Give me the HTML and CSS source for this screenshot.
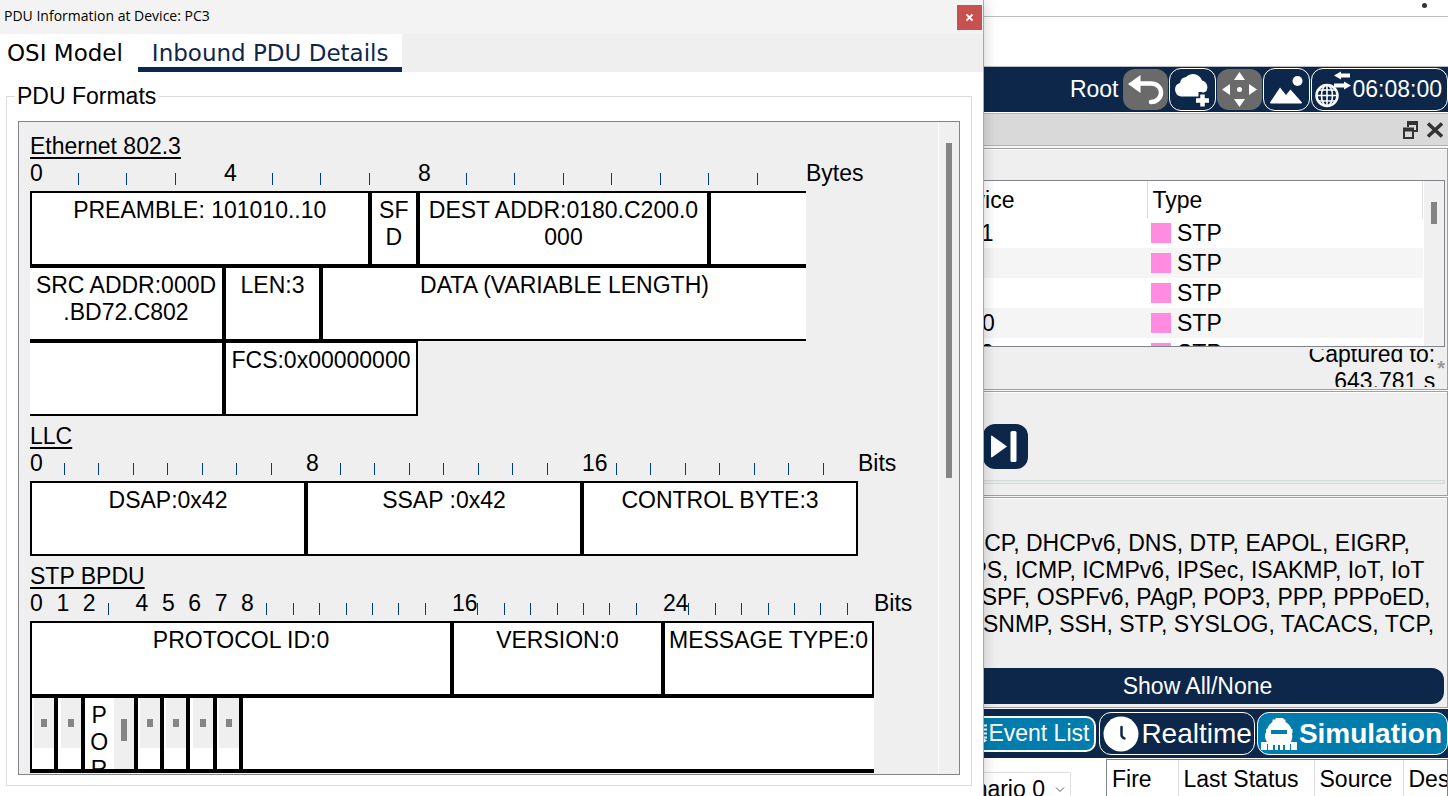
FILE: index.html
```html
<!DOCTYPE html>
<html lang="en">
<head>
<meta charset="utf-8">
<title>PDU Information</title>
<link rel="stylesheet" href="styles.css">
</head>
<body>
<div class="desktop">
  <section class="dialog" aria-label="PDU Information at Device: PC3">
    <header class="titlebar">
      <h1 class="titlebar-text">PDU Information at Device: PC3</h1>
      <button class="close-btn" type="button" aria-label="Close">
        <svg width="9" height="9" viewBox="0 0 9 9"><path d="M1.5 1.5l6 6M7.5 1.5l-6 6" stroke="#fff" stroke-width="1.8"/></svg>
      </button>
    </header>
    <nav class="tabs">
      <button class="tab" type="button">OSI Model</button>
      <button class="tab tab-active" type="button">Inbound PDU Details</button>
    </nav>
    <fieldset class="formats">
      <legend>PDU Formats</legend>
      <div class="viewport">
        <div class="viewport-body">
          <section class="pdu">
            <h2 class="pdu-title">Ethernet 802.3</h2>
            <div class="ruler">
              <div class="scale scale-16">
                <span>0</span><i></i><i></i><i></i><span>4</span><i></i><i></i><i></i><span>8</span><i></i><i></i><i></i><i></i><i></i><i></i><i></i>
              </div>
              <span>Bytes</span>
            </div>
            <div class="scale scale-16">
              <div class="cell span-7">PREAMBLE: 101010..10</div>
              <div class="cell span-1">SF<br>D</div>
              <div class="cell span-6">DEST ADDR:0180.C200.0<br>000</div>
              <div class="cell span-2 open-right"></div>
              <div class="cell span-4 open-left">SRC ADDR:000D<br>.BD72.C802</div>
              <div class="cell span-2">LEN:3</div>
              <div class="cell span-10 open-right">DATA (VARIABLE LENGTH)</div>
              <div class="cell span-4 open-left"></div>
              <div class="cell span-4">FCS:0x00000000</div>
            </div>
          </section>
          <section class="pdu">
            <h2 class="pdu-title">LLC</h2>
            <div class="ruler">
              <div class="scale scale-24">
                <span>0</span><i></i><i></i><i></i><i></i><i></i><i></i><i></i><span>8</span><i></i><i></i><i></i><i></i><i></i><i></i><i></i><span>16</span><i></i><i></i><i></i><i></i><i></i><i></i><i></i>
              </div>
              <span>Bits</span>
            </div>
            <div class="scale scale-24">
              <div class="cell span-8">DSAP:0x42</div>
              <div class="cell span-8">SSAP :0x42</div>
              <div class="cell span-8">CONTROL BYTE:3</div>
            </div>
          </section>
          <section class="pdu">
            <h2 class="pdu-title">STP BPDU</h2>
            <div class="ruler">
              <div class="scale scale-32">
                <span>0</span><span>1</span><span>2</span><i></i><span>4</span><span>5</span><span>6</span><span>7</span><span>8</span><i></i><i></i><i></i><i></i><i></i><i></i><i></i><span>16</span><i></i><i></i><i></i><i></i><i></i><i></i><i></i><span>24</span><i></i><i></i><i></i><i></i><i></i><i></i><i></i>
              </div>
              <span>Bits</span>
            </div>
            <div class="scale scale-32 flags">
              <div class="cell span-16">PROTOCOL ID:0</div>
              <div class="cell span-8">VERSION:0</div>
              <div class="cell span-8">MESSAGE TYPE:0</div>
              <div class="cell span-1 flag"><b class="mini"></b></div>
              <div class="cell span-1 flag"><b class="mini"></b></div>
              <div class="cell span-2 flag"><span class="role">P<br>O<br>R</span><b class="mini mini-tall"></b></div>
              <div class="cell span-1 flag"><b class="mini"></b></div>
              <div class="cell span-1 flag"><b class="mini"></b></div>
              <div class="cell span-1 flag"><b class="mini"></b></div>
              <div class="cell span-1 flag"><b class="mini"></b></div>
              <div class="cell span-24 flag open-right"></div>
            </div>
          </section>
        </div>
        <div class="scrollbar"><div class="thumb thumb-long"></div></div>
      </div>
    </fieldset>
  </section>

  <main class="app">
    <div class="strip strip-top"><span class="dot"></span></div>
    <div class="strip strip-blank"></div>
    <div class="toolbar">
      <span class="root">Root</span>
      <button class="tool tool-off" type="button" aria-label="Back">
        <svg width="45" height="41" viewBox="0 0 45 41"><path d="M5 15L17.500 6v18z" fill="#fff"/><path d="M16 14.500h12c6 0 10 4 10 9s-4 9.500-10 9.500" fill="none" stroke="#fff" stroke-width="4.500" stroke-linecap="round"/></svg>
      </button>
      <button class="tool" type="button" aria-label="New cluster">
        <svg width="45" height="41" viewBox="0 0 45 41"><path d="M11 27.500a7 7 0 0 1-1-13.600a7 7 0 0 1 6-5.900a9.500 9.500 0 0 1 16 3.500a7 7 0 0 1 4 11l-3.500 1.500v-1h-4v4.500z" fill="#fff"/><path d="M32.500 25.500v12M26 31.500h13" stroke="#fff" stroke-width="4.500"/></svg>
      </button>
      <button class="tool tool-off" type="button" aria-label="Move object">
        <svg width="45" height="41" viewBox="0 0 45 41" fill="#fff"><path d="M22.500 3l5.500 8H17zM22.500 38l-5.500-8h11zM5 20.500l8-5.500v11zM40 20.500l-8-5.500v11z"/><circle cx="22.500" cy="20.500" r="2.500"/></svg>
      </button>
      <button class="tool" type="button" aria-label="Set background">
        <svg width="45" height="41" viewBox="0 0 45 41" fill="#fff"><circle cx="33.500" cy="12" r="5"/><path d="M6 33.500L16 18.500l6 7.500 4.500-5.500L38 33.500q0 1-1 1H7q-1 0-1-1z"/></svg>
      </button>
      <button class="tool tool-clock" type="button">
        <svg width="38" height="41" viewBox="0 0 38 41" fill="none" stroke="#fff"><circle cx="13" cy="26.500" r="10.500" stroke-width="2.500"/><path d="M13 16v21M3 26.500h20M5 21h16M5 32h16" stroke-width="1.600"/><ellipse cx="13" cy="26.500" rx="5.500" ry="10.500" stroke-width="1.600"/><path d="M24 6.500h12M20 16.500h12" stroke-width="4"/><path d="M20 6.500l7-4v8zM37 16.500l-7-4v8z" fill="#fff" stroke="none"/></svg>
        <span>06:08:00</span>
      </button>
    </div>
    <div class="dock">
      <button class="dock-btn" type="button" aria-label="Float"><svg width="17" height="18" viewBox="0 0 17 18" fill="none" stroke="#333" stroke-width="2"><path d="M6 6V2h9v8h-4M2 8h9v9H2z"/><path d="M5 2h11M1 8.500h11" stroke-width="4"/></svg></button>
      <button class="dock-btn" type="button" aria-label="Close panel"><svg width="16" height="16" viewBox="0 0 16 16"><path d="M1 1.500l14 13M15 1.500l-14 13" stroke="#333" stroke-width="3.500"/></svg></button>
    </div>
    <div class="panels">
      <section class="panel panel-events">
        <div class="events">
          <table class="event-table">
            <thead><tr><th class="col-device">At Device</th><th>Type</th></tr></thead>
            <tbody>
              <tr><td>Switch1</td><td><span class="swatch"></span>STP</td></tr>
              <tr><td></td><td><span class="swatch"></span>STP</td></tr>
              <tr><td></td><td><span class="swatch"></span>STP</td></tr>
              <tr><td>Router0</td><td><span class="swatch"></span>STP</td></tr>
              <tr><td>Switch2</td><td><span class="swatch"></span>STP</td></tr>
            </tbody>
          </table>
          <div class="scrollbar"><div class="thumb thumb-short"></div></div>
        </div>
        <div class="captured"><p>Captured to:<br>643.781 s</p><span class="star">*</span></div>
      </section>
      <section class="panel panel-play">
        <button class="play" type="button" aria-label="Capture then forward">
          <svg width="45" height="45" viewBox="0 0 45 45" fill="#fff"><path d="M8 12.500q0-1.500 1.500-.5l14.500 10.500-14.500 10.500q-1.500 1-1.500-.5z"/><rect x="27.500" y="7" width="6" height="31" rx="1.500"/></svg>
        </button>
        <div class="progress"></div>
      </section>
      <section class="panel panel-filters">
        <p class="protocols">DHCP, DHCPv6, DNS, DTP, EAPOL, EIGRP,<br>&nbsp;TPS, ICMP, ICMPv6, IPSec, ISAKMP, IoT, IoT<br>, OSPF, OSPFv6, PAgP, POP3, PPP, PPPoED,<br>M, SNMP, SSH, STP, SYSLOG, TACACS, TCP,</p>
        <button class="show-all" type="button">Show All/None</button>
      </section>
    </div>
    <div class="modes">
      <button class="mode mode-list" type="button">
        <svg width="16" height="20" viewBox="0 0 16 20" stroke="#fff" stroke-width="2"><path d="M3 1.500h12M3 5.500h12M3 9.500h12M3 13.500h12"/><path d="M10 13l5 3.500-5 3.500z" fill="#fff" stroke="none"/></svg>
        <span>Event List</span>
      </button>
      <button class="mode" type="button">
        <svg width="36" height="36" viewBox="0 0 36 36"><circle cx="18" cy="18" r="17.500" fill="#fff"/><path d="M18.500 11v8q0 2 3 3.500" fill="none" stroke="#0d274b" stroke-width="2.500" stroke-linecap="round"/></svg>
        <span>Realtime</span>
      </button>
      <button class="mode mode-sim" type="button">
        <svg width="36" height="36" viewBox="0 0 36 36"><path d="M0 26h6q-3-4-1.500-9H5v-4h1q2-5 5.500-7V3.500h3V2h8v1.500h2V6q4 2 6 7h1v4h-.5Q32 22 30 26h6v8H0z" fill="#fff"/><path d="M10 14h16v4H10zM12 29h2v5h-2zM17 29h2v5h-2zM22 29h2v5h-2z" fill="#007cad"/><path d="M6.500 28v6M29.500 28v6" stroke="#007cad"/></svg>
        <span>Simulation</span>
      </button>
    </div>
    <div class="bottom">
      <select class="scenario" aria-label="Scenario"><option>Scenario 0</option></select>
      <svg class="chevron" width="10" height="6" viewBox="0 0 10 6"><path d="M1 .5l4 4 4-4" fill="none" stroke="#555"/></svg>
      <div class="pdu-list">
        <table class="pdu-table"><thead><tr><th class="col-fire">Fire</th><th class="col-status">Last Status</th><th class="col-source">Source</th><th>Des</th></tr></thead></table>
      </div>
    </div>
  </main>
</div>
</body>
</html>
```
FILE: styles.css
```css
* { box-sizing: border-box; }

body {
  margin: 0;
  font-family: "Liberation Sans", Arial, sans-serif;
  font-size: 23px;
  line-height: 27px;
  color: #000;
  background: #fff;
  overflow: hidden;
}

button, select {
  font: inherit;
  color: inherit;
  border: 0;
  padding: 0;
  background: none;
}

svg { display: block; flex: none; }
h1, h2, p { margin: 0; font-size: inherit; font-weight: normal; }

.desktop { display: flex; min-height: 100vh; }

/* Dialog window */
.dialog {
  position: relative;
  z-index: 1;
  flex: 1;
  min-width: 0;
  display: flex;
  flex-direction: column;
  background: #fff;
  border-right: 1px solid #a8a8a8;
  box-shadow: 0 0 14px rgba(0, 0, 0, 0.2);
}

.titlebar {
  display: flex;
  align-items: center;
  justify-content: space-between;
  height: 34px;
  padding: 0 1px 0 4px;
  background: #f3f3f3;
}

.titlebar-text {
  font-family: "Open Sans", "Noto Sans", sans-serif;
  font-size: 14px;
  line-height: 30px;
  padding-bottom: 2px;
}

.close-btn {
  display: grid;
  place-items: center;
  width: 25px;
  height: 25px;
  background: #c75050;
}

.tabs { display: flex; background: #efefef; }

.tab {
  height: 38px;
  padding: 6px 15px 0 7px;
  font-family: "DejaVu Sans", sans-serif;
  font-size: 23px;
  background: #fff;
  border-bottom: 5px solid #fff;
}

.tab-active { padding: 6px 14px 0; color: #0d274b; border-color: #0d274b; }

.formats {
  flex: 1;
  display: flex;
  min-width: 0;
  margin: 11px 11px 10px 6px;
  padding: 11px 11px 10px;
  border: 1px solid #dcdcdc;
}

.formats legend { padding: 0 3px 0 2px; margin-left: -3px; }

.viewport {
  display: flex;
  flex: 1;
  min-width: 0;
  background: #efefef;
  border: 1px solid #82848c;
}

.viewport-body { flex: 1; min-width: 0; padding: 11px 0 0 11px; overflow: hidden; }

.scrollbar {
  flex: none;
  width: 21px;
  padding: 21px 7px 0;
  background: #f0f0f0;
  border-left: 1px solid #fff;
}

.thumb { width: 6px; background: #858585; }
.thumb-long { height: 335px; }
.thumb-short { height: 22px; }

/* Packet layout diagrams */
.pdu { margin-bottom: 7px; }
.pdu:last-child { margin-bottom: 0; }
.pdu-title { text-decoration: underline; text-decoration-thickness: 2px; text-underline-offset: 3px; text-decoration-skip-ink: none; }
.ruler { display: flex; height: 31px; }
.scale { display: grid; flex: none; }
.scale-16 { width: 776px; grid-template-columns: repeat(16, minmax(0, 1fr)); }
.scale-24 { width: 828px; grid-template-columns: repeat(24, minmax(0, 1fr)); }
.scale-32 { width: 844px; grid-template-columns: repeat(32, minmax(0, 1fr)); }
.ruler span { white-space: nowrap; }
.ruler i { height: 12px; margin: 13px 0 0 -1px; border-left: 1px solid #003c8c; }

.cell {
  height: 75px;
  padding-top: 4px;
  text-align: center;
  white-space: nowrap;
  overflow: hidden;
  background: #fff;
  border: 2px solid #000;
}

.open-left { border-left: 0; }
.open-right { border-right: 0; }
.span-1 { grid-column: span 1; }
.span-2 { grid-column: span 2; }
.span-4 { grid-column: span 4; }
.span-6 { grid-column: span 6; }
.span-7 { grid-column: span 7; }
.span-8 { grid-column: span 8; }
.span-10 { grid-column: span 10; }
.span-16 { grid-column: span 16; }
.span-24 { grid-column: span 24; }
.flag { display: flex; justify-content: flex-end; padding: 0; border-bottom-width: 4px; }
.flags .flag { height: 77px; }
.role { flex: 1; padding-top: 4px; }
.mini { flex: none; width: 20px; height: 50px; padding: 21px 7px; background: #efefef; }
.mini::before { content: ""; display: block; width: 6px; height: 8px; background: #858585; }
.mini-tall { height: auto; }
.mini-tall::before { height: 22px; }

/* Main window, partly under the dialog */
.app {
  flex: 0 0 544px;
  margin-left: -80px;
  min-width: 0;
  display: flex;
  flex-direction: column;
  max-height: 100vh;
  overflow: hidden;
}

.strip { flex: none; border-bottom: 1px solid #bdbdbd; }
.strip-top { display: flex; justify-content: flex-end; height: 17px; padding: 3px 21px 0 0; }
.strip-blank { height: 50px; }
.dot { width: 5px; height: 5px; border-radius: 50%; background: #333; }

.toolbar {
  display: flex;
  flex: none;
  align-items: center;
  justify-content: flex-end;
  gap: 1px;
  height: 45px;
  color: #fff;
  background: #0d274b;
}

.root { margin-right: 4px; }

.tool {
  display: flex;
  align-items: center;
  height: 43px;
  border: 1px solid #fff;
  border-radius: 12px;
}

.tool-off { height: 41px; border: 0; background: #6a6a6a; }
.tool-clock { padding: 0 5px 0 2px; }

.dock {
  display: flex;
  flex: none;
  align-items: center;
  justify-content: flex-end;
  gap: 8px;
  height: 33px;
  margin-top: 1px;
  padding-right: 5px;
  background: #d9d9d9;
  border-top: 1px solid #b8b8b8;
  border-bottom: 1px solid #b0b0b0;
}

.panels { display: flex; flex: none; flex-direction: column; gap: 1px; padding: 2px 0 1px; background: #f7f7f7; }
.panel { background: #efefef; border: 1px solid #a0a0a0; box-shadow: inset 0 1px #fff; }
.panel-events { padding: 31px 2px 2px 0; }
.events { display: flex; height: 167px; overflow: hidden; background: #fff; border: 1px solid #82848c; }
.event-table { flex: 1; border-collapse: collapse; table-layout: fixed; }
.event-table th { height: 37px; padding: 2px 5px 0; text-align: left; font-weight: normal; border-right: 1px solid #dedede; }
.event-table td { height: 30px; padding: 0 3px 0 7px; white-space: nowrap; }
.event-table td:last-child { padding-left: 4px; }
.event-table tr:nth-child(even) { background: #f5f5f5; }
.event-table .col-device { width: 241px; padding-left: 10px; }
.swatch { display: inline-block; width: 20px; height: 20px; margin-right: 6px; vertical-align: -2px; background: #ff8ce0; }

.captured {
  display: flex;
  align-items: center;
  justify-content: flex-end;
  gap: 2px;
  height: 38px;
  margin-top: 2px;
  overflow: hidden;
  text-align: right;
}

.star { color: #999; font-size: 20px; font-weight: bold; }

.panel-play { padding: 32px 2px 11px 78px; }
.play { display: block; border-radius: 12px; background: #0d274b; }
.progress { height: 4px; margin-top: 11px; background: #e6eaea; border: 1px solid #d3d8d8; }

.panel-filters { padding: 32px 3px 3px 46px; }
.protocols { white-space: nowrap; }
.show-all { display: block; width: 100%; height: 36px; margin-top: 30px; color: #fff; background: #0d274b; border-radius: 12px; }

.modes {
  display: flex;
  flex: none;
  align-items: center;
  justify-content: flex-end;
  gap: 2px;
  height: 49px;
  color: #fff;
  background: #0d274b;
}

.mode {
  display: flex;
  align-items: center;
  gap: 2px;
  height: 43px;
  padding: 0 2px 0 3px;
  font-size: 28px;
  border: 1px solid #fff;
  border-radius: 12px;
}

.mode-list { gap: 0; height: 36px; margin-right: 1px; padding: 0 5px; font-size: 23px; background: #007cad; border-width: 2px; border-radius: 10px; }
.mode-sim { padding-right: 5px; font-weight: bold; background: #007cad; }

.bottom { display: flex; flex: 1; padding-top: 1px; background: #fff; }
.scenario { flex: none; width: 140px; height: 34px; margin: 13px 0 0 27px; padding: 0 3px; appearance: none; background: #fff; border: 1px solid #dedede; }
.chevron { margin: 28px 0 0 -16px; }
.pdu-list { flex: none; width: 342px; margin-left: 41px; overflow: hidden; border: 1px solid #82848c; border-bottom: 0; }
.pdu-table { width: 100%; border-collapse: collapse; table-layout: fixed; }
.pdu-table th { height: 37px; padding: 2px 0 0 5px; text-align: left; font-weight: normal; white-space: nowrap; border-right: 1px solid #dedede; }
.pdu-table th:last-child { border-right: 0; }
.col-fire { width: 71px; }
.col-status { width: 136px; }
.col-source { width: 89px; }
```
